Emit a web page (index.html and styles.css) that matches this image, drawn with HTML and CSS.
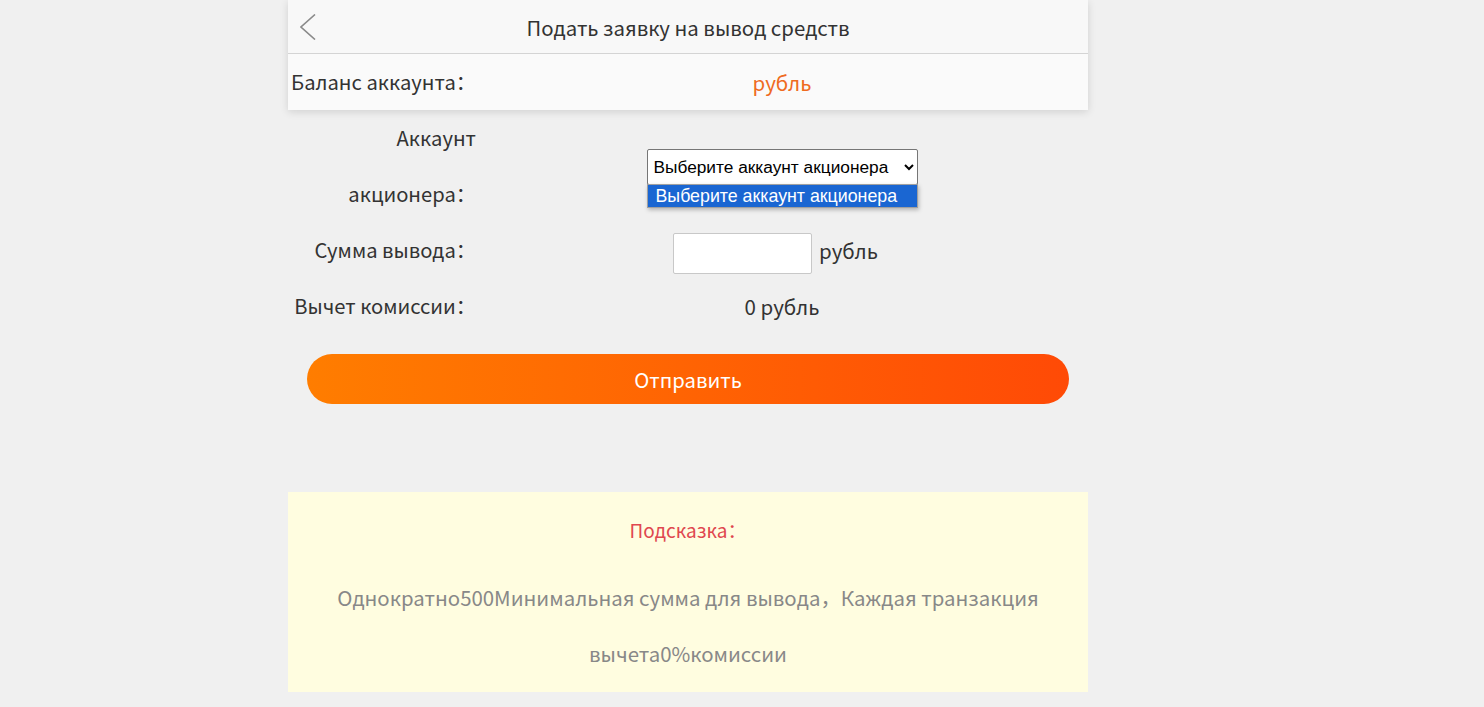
FILE: index.html
```html
<!DOCTYPE html>
<html lang="ru">
<head>
<meta charset="utf-8">
<title>Подать заявку на вывод средств</title>
<link rel="stylesheet" href="styles.css">
</head>
<body>
<div class="page">
  <div class="top">
    <div class="header">
      <a class="back" href="#">
        <svg width="16" height="26" viewBox="0 0 16 26"><polyline points="15,0.5 1,13 15,25.5" fill="none" stroke="#8a8a8a" stroke-width="1.6"/></svg>
      </a>
      <div class="title">Подать заявку на вывод средств</div>
      <div></div>
    </div>
    <div class="row balance">
      <div class="label">Баланс аккаунта：</div>
      <div class="value orange">рубль</div>
    </div>
  </div>

  <div class="row account">
    <div class="label">Аккаунт акционера：</div>
    <div class="value">
      <div class="select-wrap">
        <select class="select">
          <option>Выберите аккаунт акционера</option>
        </select>
        <div class="dropdown">
          <div class="option active">Выберите аккаунт акционера</div>
        </div>
      </div>
    </div>
  </div>

  <div class="row">
    <div class="label">Сумма вывода：</div>
    <div class="value">
      <input class="amount" type="text"><span class="unit">рубль</span>
    </div>
  </div>

  <div class="row">
    <div class="label">Вычет комиссии：</div>
    <div class="value">0 рубль</div>
  </div>

  <button class="submit">Отправить</button>

  <div class="tip">
    <div class="tip-title">Подсказка：</div>
    <div class="tip-text">Однократно500Минимальная сумма для вывода，Каждая транзакция вычета0%комиссии</div>
  </div>
</div>
</body>
</html>
```

FILE: styles.css
```css
* { box-sizing: border-box; }
body {
  margin: 0;
  background: #f0f0f0;
  font-family: "Noto Sans CJK SC", "Noto Sans", sans-serif;
  color: #333;
}
.page {
  width: 800px;
  margin-left: 288px;
}
.top {
  box-shadow: 0 2px 8px rgba(0, 0, 0, 0.13);
}
.header {
  height: 54px;
  background: #f8f8f8;
  border-bottom: 1px solid #d4d4d4;
  display: grid;
  grid-template-columns: 60px 1fr 60px;
  align-items: center;
}
.back {
  display: flex;
  padding-left: 12px;
}
.title {
  text-align: center;
  font-size: 20.4px;
  color: #333;
}
.row {
  display: flex;
  align-items: center;
}
.balance {
  background: #fafafa;
  height: 56px;
}
.label {
  width: 188px;
  flex: none;
  text-align: right;
  line-height: 56px;
  font-size: 20.2px;
}
.value {
  flex: 1;
  text-align: center;
  line-height: 56px;
  font-size: 20.5px;
}
.orange { color: #ef6b1f; }
.select-wrap {
  position: relative;
  display: inline-block;
  width: 271px;
  vertical-align: middle;
  margin-bottom: 4px;
}
.select {
  display: block;
  width: 271px;
  height: 36px;
  font-family: "Liberation Sans", Arial, sans-serif;
  font-size: 17.3px;
  color: #000;
  background: #fff;
  border: 1px solid #767676;
  border-radius: 2px;
  padding: 0 2px;
}
.dropdown {
  position: absolute;
  left: 0;
  top: 35px;
  width: 271px;
  background: #fff;
  border: 1px solid #a0a0a0;
  box-shadow: 1px 2px 4px rgba(0, 0, 0, 0.25);
  text-align: left;
}
.option {
  font-family: "Liberation Sans", Arial, sans-serif;
  font-size: 17.8px;
  line-height: 22px;
  padding: 0 8px;
}
.option.active {
  background: #1a66d2;
  color: #fff;
}
.amount {
  width: 139px;
  height: 41px;
  border: 1px solid #c8c8c8;
  border-radius: 2px;
  background: #fff;
  vertical-align: middle;
}
.unit {
  margin-left: 7px;
  margin-right: 13px;
}
.submit {
  display: block;
  width: 762px;
  height: 50px;
  margin: 20px 19px 0;
  border: none;
  border-radius: 25px;
  background: linear-gradient(90deg, #ff7d00, #ff4a06);
  color: #fff;
  font-family: "Noto Sans CJK SC", "Noto Sans", sans-serif;
  font-size: 20.3px;
}
.tip {
  margin-top: 88px;
  background: #fffde0;
  padding: 10px 40px 8px;
  text-align: center;
  height: 200px;
}
.tip-title {
  color: #e0474f;
  font-size: 19px;
  line-height: 56px;
}
.tip-text {
  margin-top: 11px;
  color: #888;
  font-size: 20.4px;
  line-height: 56px;
}
```
